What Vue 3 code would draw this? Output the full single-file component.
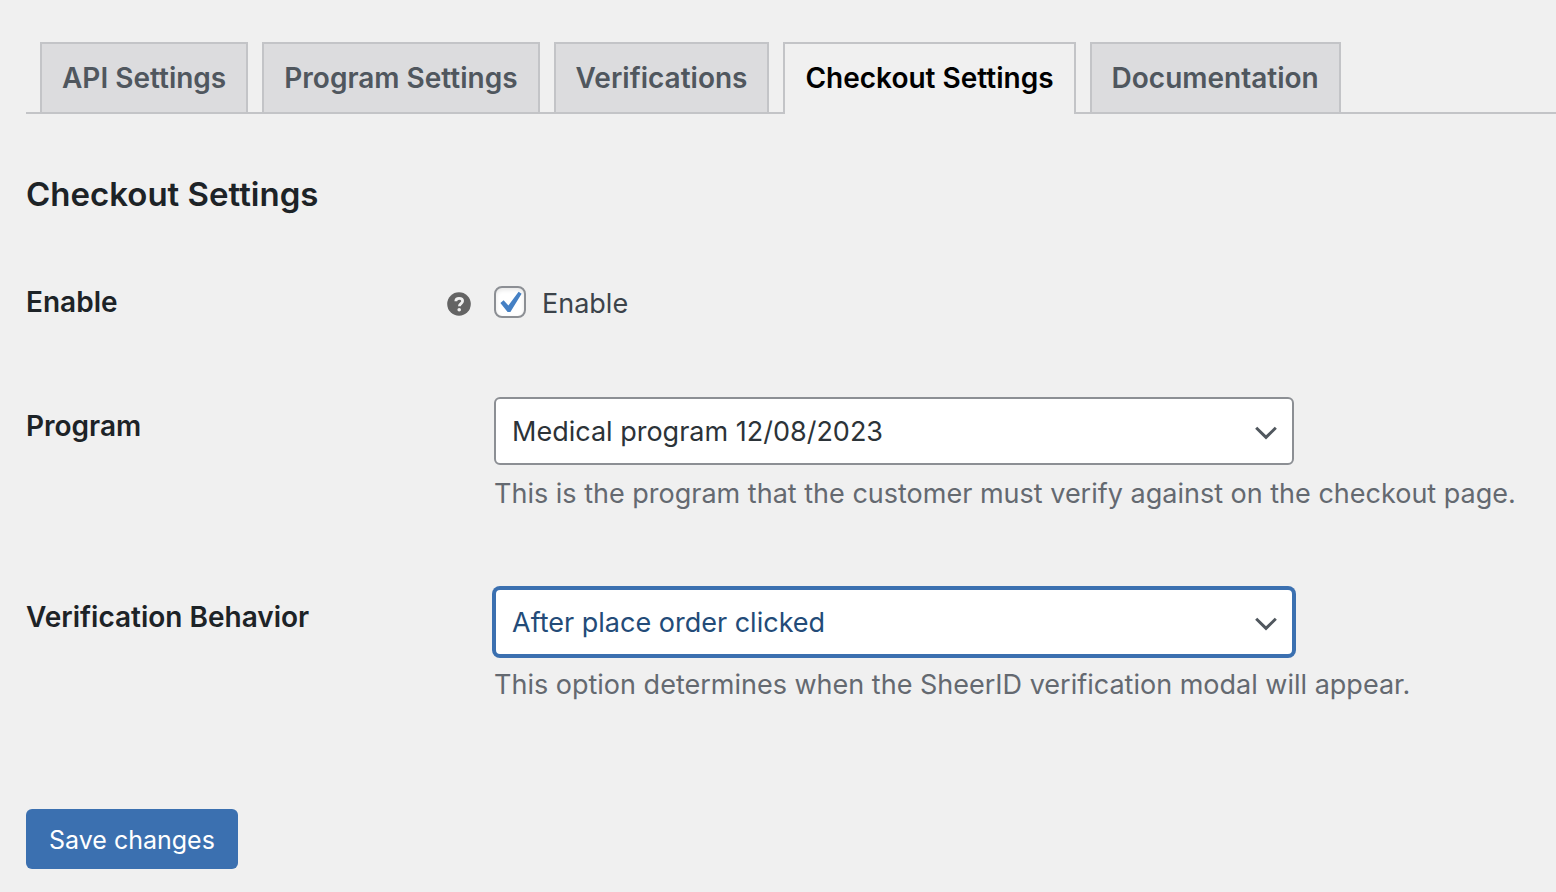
<script setup>
import { ref } from 'vue'

const tabs = ['API Settings', 'Program Settings', 'Verifications', 'Checkout Settings', 'Documentation']
const active = ref('Checkout Settings')
const enabled = ref(true)
const program = ref('Medical program 12/08/2023')
const behavior = ref('After place order clicked')
</script>

<template>
  <main class="page">
    <nav class="tabs">
      <a
        v-for="tab in tabs"
        :key="tab"
        href="#"
        class="tab"
        :class="{ active: tab === active }"
        @click.prevent="active = tab"
      >{{ tab }}</a>
    </nav>

    <form class="form" @submit.prevent>
      <h2>Checkout Settings</h2>

      <div class="row enable-row">
        <div class="label">
          <span>Enable</span>
          <svg class="help" viewBox="0 0 24 24" role="img" aria-label="Help">
            <circle cx="12" cy="12" r="11.8" fill="#646464" />
            <path d="M8.8 9.2C8.8 7.1 10.2 6.3 12.1 6.3S15.6 7.3 15.6 9.1c0 2.5-3.2 2.6-3.2 5.1" fill="none" stroke="#f0f0f0" stroke-width="2.8" />
            <circle cx="12.2" cy="17.7" r="1.8" fill="#f0f0f0" />
          </svg>
        </div>
        <label class="check">
          <span class="box">
            <input v-model="enabled" type="checkbox" />
            <svg v-if="enabled" viewBox="0 0 32 32" aria-hidden="true">
              <path d="M24.6 5.8 27.6 7.8 16.4 26H13.6L6.4 17 9.6 14.2 14.4 19.4Z" fill="#4580c4" />
            </svg>
          </span>
          <span class="check-text">Enable</span>
        </label>
      </div>

      <div class="row program-row">
        <label class="label" for="program">Program</label>
        <div class="field">
          <div class="select">
            <select id="program" v-model="program">
              <option>Medical program 12/08/2023</option>
            </select>
            <svg viewBox="0 0 24 16" aria-hidden="true"><path d="M2.2 2.8 12 12.4 21.8 2.8" /></svg>
          </div>
          <p>This is the program that the customer must verify against on the checkout page.</p>
        </div>
      </div>

      <div class="row behavior-row">
        <label class="label" for="behavior">Verification Behavior</label>
        <div class="field">
          <div class="select highlighted">
            <select id="behavior" v-model="behavior">
              <option>After place order clicked</option>
            </select>
            <svg viewBox="0 0 24 16" aria-hidden="true"><path d="M2.2 2.8 12 12.4 21.8 2.8" /></svg>
          </div>
          <p>This option determines when the SheerID verification modal will appear.</p>
        </div>
      </div>

      <button type="submit">Save changes</button>
    </form>
  </main>
</template>

<style>
body {
  background: #f0f0f0;
}
</style>

<style scoped>
.page {
  padding: 42px 0 23px 26px;
  font-family: Inter, "Liberation Sans", sans-serif;
  font-size: 27px;
  line-height: 36px;
  color: #1d2327;
}
.tabs {
  display: flex;
  gap: 14px;
  padding-left: 14px;
  border-bottom: 2px solid #c3c4c7;
}
.tab {
  box-sizing: border-box;
  height: 70px;
  padding: 16px 20px;
  border: 2px solid #c3c4c7;
  border-bottom: 0;
  background: #dcdcde;
  color: #50575e;
  font-size: 28px;
  font-weight: 600;
  text-decoration: none;
  white-space: nowrap;
}
.tab.active {
  height: 72px;
  margin-bottom: -2px;
  background: #f0f0f0;
  color: #000;
}
h2 {
  margin: 58px 0 0;
  font-size: 33px;
  line-height: 44px;
  font-weight: 600;
}
.row {
  display: grid;
  grid-template-columns: 468px minmax(0, 1fr);
}
.label {
  font-size: 28px;
  font-weight: 600;
}
.enable-row {
  margin-top: 68px;
}
.enable-row .label {
  display: flex;
  justify-content: space-between;
  align-items: flex-start;
  padding-right: 23px;
}
.help {
  width: 24px;
  height: 24px;
  margin-top: 8px;
}
.check {
  display: flex;
  align-items: flex-start;
  gap: 16px;
  color: #3c434a;
}
.check-text {
  padding-top: 2px;
}
.box {
  display: grid;
  width: 32px;
  height: 32px;
  margin-top: 2px;
}
.box input {
  grid-area: 1 / 1;
  box-sizing: border-box;
  width: 32px;
  height: 32px;
  margin: 0;
  appearance: none;
  border: 2px solid #8c8f94;
  border-radius: 8px;
  background: #fff;
  box-shadow: inset 0 2px 4px rgba(0, 0, 0, 0.1);
}
.box svg {
  grid-area: 1 / 1;
  pointer-events: none;
}
.program-row,
.behavior-row {
  margin-top: 75px;
}
.behavior-row {
  margin-top: 76px;
}
.program-row .label,
.behavior-row .label {
  padding-top: 11px;
}
.select {
  display: grid;
  align-items: center;
  width: 800px;
  max-width: 100%;
}
.select select {
  grid-area: 1 / 1;
  box-sizing: border-box;
  width: 100%;
  height: 68px;
  padding: 2px 48px 0 16px;
  appearance: none;
  border: 2px solid #8c8f94;
  border-radius: 6px;
  background: #fff;
  color: #2c3338;
  font: inherit;
  outline: none;
}
.select svg {
  grid-area: 1 / 1;
  justify-self: end;
  width: 24px;
  height: 16px;
  margin: 3px 16px 0 0;
  fill: none;
  stroke: #50575e;
  stroke-width: 3;
  pointer-events: none;
}
.highlighted select {
  border-color: #3b70b0;
  box-shadow: 0 0 0 2px #3b70b0;
  color: #234b78;
}
.field p {
  margin: 11px 0 0;
  color: #646970;
  white-space: nowrap;
}
button {
  display: block;
  height: 60px;
  margin-top: 106px;
  padding: 2px 23px 0;
  border: 0;
  border-radius: 6px;
  background: #3b70b0;
  color: #fff;
  font: inherit;
  font-size: 25px;
}
</style>
